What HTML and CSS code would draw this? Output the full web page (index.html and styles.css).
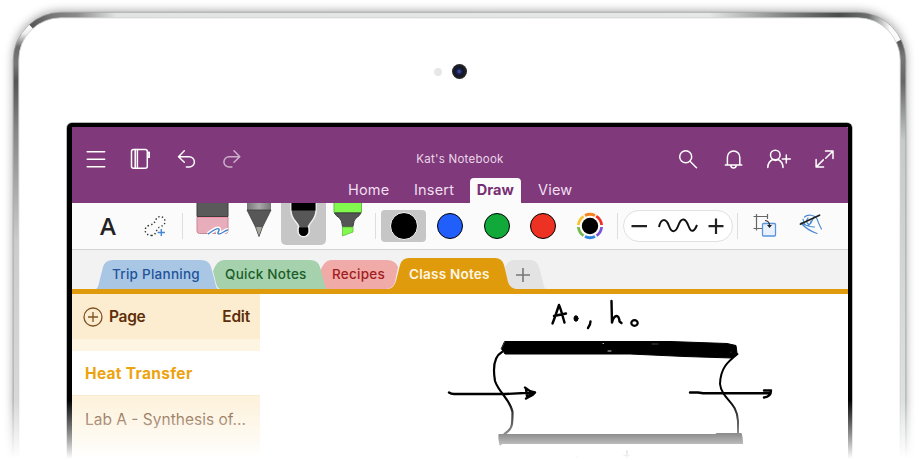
FILE: index.html
```html
<!DOCTYPE html>
<html lang="en">
<head>
<meta charset="utf-8">
<title>Kat's Notebook</title>
<link rel="stylesheet" href="styles.css">
</head>
<body>
<div class="stage">
  <div class="tablet">
    <svg class="bezel" viewBox="0 0 919 460" fill="none">
      <defs>
        <linearGradient id="topEdge" gradientUnits="userSpaceOnUse" x1="30" y1="0" x2="890" y2="0">
          <stop offset="0" stop-color="#555"/><stop offset=".025" stop-color="#777"/><stop offset=".055" stop-color="#8c8c8c"/><stop offset=".1" stop-color="#e2e4e4"/>
          <stop offset=".79" stop-color="#e6e8e8"/><stop offset=".88" stop-color="#808282"/><stop offset=".94" stop-color="#4b4c4c"/><stop offset=".975" stop-color="#6d6f6f"/><stop offset="1" stop-color="#fafafa"/>
        </linearGradient>
        <linearGradient id="leftEdge" gradientUnits="userSpaceOnUse" x1="0" y1="25" x2="0" y2="460">
          <stop offset="0" stop-color="#fff"/><stop offset=".02" stop-color="#eee"/><stop offset=".05" stop-color="#6c6c6c"/><stop offset=".09" stop-color="#777"/>
          <stop offset=".13" stop-color="#555"/><stop offset=".24" stop-color="#858585"/><stop offset=".5" stop-color="#ccc"/><stop offset="1" stop-color="#ddd"/>
        </linearGradient>
        <linearGradient id="rightEdge" gradientUnits="userSpaceOnUse" x1="0" y1="40" x2="0" y2="460">
          <stop offset="0" stop-color="#555"/><stop offset=".04" stop-color="#777"/><stop offset=".1" stop-color="#666"/><stop offset=".24" stop-color="#c8caca"/><stop offset="1" stop-color="#e4e6e6"/>
        </linearGradient>
      </defs>
      <path d="M16 470V60A45 45 0 0 1 31 26.500" stroke="url(#leftEdge)" stroke-width="5.500"/>
      <path d="M31 26.500A45 45 0 0 1 61 15H858A45 45 0 0 1 898.500 41" stroke="url(#topEdge)" stroke-width="5.500"/>
      <path d="M898.500 41A45 45 0 0 1 903 60V470" stroke="url(#rightEdge)" stroke-width="5.500"/>
      <path d="M13.200 470V60A48 48 0 0 1 61 12.300H858A48 48 0 0 1 905.800 60V470" stroke="#9a9a9a" stroke-width=".8"/>
      <path d="M18.800 470V60A42 42 0 0 1 61 17.800H858A42 42 0 0 1 900.200 60V470" stroke="#c9cccb" stroke-width=".8"/>
    </svg>
    <div class="camera"><span class="sensor"></span><span class="lens"></span></div>
    <div class="screen">
      <header class="header">
        <div class="topbar">
          <div class="icons">
            <svg viewBox="0 0 24 24"><path d="M3.200 4.700h17.500M3.200 12.200h17.500M3.200 19.700h17.500"/></svg>
            <svg viewBox="0 0 24 24"><rect x="2.500" y="2.500" width="15.800" height="18.700" rx="2"/><path d="M6.200 2.500v18.500M8.400 2.500v18.500"/><path d="M19.200 5.500h.9v4.700h-.9" stroke-width="1.800"/></svg>
            <svg viewBox="0 0 24 24"><path d="M9.300 3.800 3.500 9.700l5.800 5.600M3.800 9.700h10.400a5.200 5.200 0 0 1 0 10.400h-2.800"/></svg>
            <svg class="dim" viewBox="0 0 24 24"><path d="M14 3.800l5.800 5.900-5.800 5.600M19.500 9.700H9.100a5.200 5.200 0 0 0 0 10.400h2.800"/></svg>
          </div>
          <div class="title">Kat's Notebook</div>
          <div class="icons right">
            <svg viewBox="0 0 24 24"><circle cx="9.700" cy="9.800" r="6"/><path d="m14 14.300 6.500 6.400"/></svg>
            <svg viewBox="0 0 24 24"><path d="M3.300 18h16.500M5.400 18V10.200a6.200 6.200 0 0 1 12.400 0V18M8.800 18.200a2.700 2.700 0 0 0 5.400 0"/></svg>
            <svg viewBox="0 0 24 24"><circle cx="8.300" cy="8" r="4.800"/><path d="M.8 20.500c0-5 3-7 5-8 1.700 1.200 3.700 1.200 5.200 0 2 1 5 3 5 8M19.300 7.900v8M15.300 11.900h8"/></svg>
            <svg viewBox="0 0 24 24"><path d="M12.500 4H20v7.500M19.800 4.200l-7.100 7M3.100 12.600v7.500h7.500M3.300 19.900l7-7"/></svg>
          </div>
        </div>
        <nav class="ribbon"><a class="home">Home</a><a class="insert">Insert</a><a class="active">Draw</a><a class="view">View</a></nav>
      </header>

      <div class="toolbar">
        <div class="tool letter">A</div>
        <div class="tool"><svg width="46" height="46" viewBox="131 203 46 46" fill="none"><path d="M152 235.500c-8 0-9-8-3-10 4-1 6-3 7-6 2-5 9-3 9 2 0 4-3 4-6 6-3 2-3 8-7 8z" stroke="#333" stroke-width="1.400" stroke-dasharray="1.400 2.200"/><path d="M161 227.500v8M157.500 232.500h7.500" stroke="#fafafa" stroke-width="3.500"/><path d="M161.300 229v7M157.600 232.500h7.300" stroke="#4288d6" stroke-width="1.400"/></svg></div>
        <i class="sep sep-a"></i>
        <div class="tool"><svg width="46" height="46" viewBox="189 203 46 46" fill="none"><path d="M197 217h31v14q0 2.500-2.500 2.500h-26q-2.500 0-2.500-2.500z" fill="#e8adba" stroke="#cc8896"/><path d="M197 202h31v14.500h-31z" fill="#5a5a5a" stroke="#3c3c3c"/><path d="M198 217.500h29" stroke="#f491a8"/><path d="M208 234c5-3 9-7 11-5 1 2-3 4 0 5 3 0 6-4 9-4" stroke="#fff" stroke-width="4"/><path d="M208 234c5-3 9-7 11-5 1 2-3 4 0 5 3 0 6-4 9-4" stroke="#4386d0" stroke-width="1.500"/></svg></div>
        <div class="tool"><svg width="46" height="46" viewBox="235 203 46 46"><defs><linearGradient id="barrel"><stop stop-color="#777"/><stop offset=".5" stop-color="#aaa"/><stop offset="1" stop-color="#777"/></linearGradient></defs><path d="M247 203h24v7h-24z" fill="url(#barrel)"/><path d="M247 210h24l-8.500 17-3.500 9.500-3.500-9.500z" fill="#575757" stroke="#3d3d3d" stroke-width=".8"/><path d="m256 227.500 1.300-.5h3.600l1.100.5-3 8z" fill="#a5a59c"/></svg></div>
        <div class="tool narrow selected"><svg width="46" height="46" viewBox="281 203 46 46"><path d="M291 202h25v9c0 8-6 11-7.500 15.500q.8 1 .8 4.500a5.700 5.700 0 0 1-11.400 0q0-3.500.8-4.500c-1.500-4.500-7.700-7.500-7.700-15.500z" fill="#575757" stroke="#eee" stroke-width="1.500"/><path d="M291.500 202h24v8.500h-24zM299 227.500h9v4a4.500 4.500 0 0 1-9 0z"/></svg></div>
        <div class="tool narrow"><svg width="46" height="46" viewBox="326 203 46 46"><path d="M334 202h27.500v10.500H334z" fill="#82f94f" stroke="#64bd40"/><path d="M334.500 213h26.500q-1.500 3-5 5-2.500 2-3 8.500h-10.500q-.5-6.500-3-8.500-3.500-2-5-5z" fill="#555" stroke="#3c3c3c"/><path d="M342.500 227H353v5l-10.500 4z" fill="#82f94f" stroke="#64bd40" stroke-width=".8"/></svg></div>
        <i class="sep sep-b"></i>
        <div class="swatches">
          <div class="swatch chosen"><b class="black"></b></div>
          <div class="swatch"><b class="blue"></b></div>
          <div class="swatch"><b class="green"></b></div>
          <div class="swatch"><b class="red"></b></div>
          <div class="swatch"><svg width="28" height="28" viewBox="-14 -14 28 28" fill="none" stroke-width="2.800">
            <path d="M-5-10.600A11.700 11.700 0 0 1 5-10.600" stroke="#f5841f"/><path d="M6.200-9.900A11.700 11.700 0 0 1 11.600-1" stroke="#ef2e24"/><path d="M11.600 1A11.700 11.700 0 0 1 6.500 9.700" stroke="#7b54d8"/><path d="M5 10.600A11.700 11.700 0 0 1-5 10.600" stroke="#2c83e0"/><path d="M-6.500 9.700A11.700 11.700 0 0 1-11.600 1" stroke="#73b94c"/><path d="M-11.600-1A11.700 11.700 0 0 1-6.500-9.700" stroke="#f9c22d"/><circle r="8.200" fill="#000"/></svg></div>
        </div>
        <i class="sep sep-c"></i>
        <div class="thickness"><svg width="109" height="32" viewBox="0 0 109 32" fill="none" stroke="#222" stroke-width="2.200"><path d="M7.500 15.200H23M84.500 15.200h15M92 7.500v15.500"/><path d="M35 16c2-9 7-9 10-1 3 8 7 6 9.500-1 3-8 7-7 10 1 3 8 6 5 8.500-1" stroke="#111" stroke-width="2"/></svg></div>
        <i class="sep sep-d"></i>
        <div class="tool shapes"><svg width="46" height="46" viewBox="742 203 46 46" fill="none"><path d="M756.500 214v16.500M753.500 216.500h14M767.500 214v5M753.500 228.500h9" stroke="#666" stroke-width="1.200"/><rect x="762.500" y="223.500" width="13" height="12.500" rx="1" fill="#e9f2fc" stroke="#5994da" stroke-width="1.300"/><path d="M765 220.500q4.500.5 4.500 5" stroke="#333" stroke-width="1.200"/><path d="m767 225 2.500 3 2.500-3z" fill="#222"/></svg></div>
        <div class="tool"><svg width="46" height="46" viewBox="788 203 46 46" fill="none" stroke-linecap="round"><path d="M801 223c5 6 9 8 16 10.500M803 219c2 10 7 7 8 2M804.500 217c3-3 10-2 12 1 2 4 2 6 5 11M808 218c-3 4 0 8 3 5l3-6M801.500 223c5 3 8 4 13 4" stroke="#4c8bd0" stroke-width="1.200"/><path d="m800.500 224 19-8.800" stroke="#222" stroke-width="1.800"/></svg></div>
      </div>

      <div class="sections">
        <div class="tab trip"><svg viewBox="0 0 122 29" preserveAspectRatio="none"><path d="M0 29Q2 28 3 23L7 7Q9 0 17 0H105Q113 0 115 7L119 22Q120 28 122 29z"/></svg><span>Trip Planning</span></div>
        <div class="tab quick"><svg viewBox="0 0 115 29" preserveAspectRatio="none"><path d="M7 29Q4 28 3 23L0 11Q4 0 11 0H97Q105 0 107 7L111 22Q112 28 115 29z"/></svg><span>Quick Notes</span></div>
        <div class="tab recipes"><svg viewBox="0 0 80 29" preserveAspectRatio="none"><path d="M6 29Q4 28 3 23L0 12Q4 0 11 0H67Q75 0 78 7L75 22Q73 29 66 29z"/></svg><span>Recipes</span></div>
        <div class="tab current"><svg viewBox="0 0 128 31" preserveAspectRatio="none"><path d="M0 31Q6 30 8 23L12 7Q14 0 21 0H107Q114 0 116 7L120 24Q122 30 128 31z"/></svg><span>Class Notes</span></div>
        <div class="tab add"><svg viewBox="0 0 42 29" preserveAspectRatio="none"><path d="M8 29Q4 27 3 22L0 9Q4 0 10 0H26Q33 0 35 7L39 22Q40 28 42 29z"/><path class="plus" d="M12 15h14M19 8v14"/></svg></div>
      </div>

      <main class="content">
        <aside class="pages">
          <div class="pagehead"><svg width="20" height="20" viewBox="0 0 20 20"><circle cx="10" cy="10" r="9"/><path d="M5 10h10M10 5v10"/></svg><span class="add-page">Page</span><span class="edit">Edit</span></div>
          <div class="strip"></div>
          <div class="page open"><span>Heat Transfer</span></div>
          <div class="page lab"><span>Lab A - Synthesis of...</span></div>
        </aside>
        <svg class="ink" viewBox="260 294 588 166" fill="none" stroke="#000" stroke-linecap="round" stroke-linejoin="round">
          <path d="M552.500 323.500c2-5 5-14 6.500-18.500 2 4 4 13 5.500 17.500M554 316l12-2.500" stroke-width="2.400"/>
          <ellipse cx="576" cy="318.500" rx="2" ry="2.800" fill="#000"/>
          <path d="M590.500 321.500c0 3-1 4.500-2.500 6.500M611.500 301l.5 21.500c2-8 7-9 7.500-1l2 1.500" stroke-width="2.400"/>
          <ellipse cx="634.500" cy="323" rx="3.200" ry="2.800" stroke-width="2.200"/>
          <path d="M505 341.500H670L727 343.500 736 345.500 737 353 732 358 685 356.500 630 354H505L501.500 349z" fill="#000" stroke-width="1"/>
          <path d="M502 352c-9 5-9 17-7 29 4 12 15 18 17.500 31 0 13 0 17-8 22" stroke-width="2.200"/>
          <path d="M449 392.500q2 1.500 5 1.500h51l29-1.500M525 387.500c2 2 5 4 10 5-2 3-6 4-9 6M526 389l1 7 5-2" stroke-width="2.400"/>
          <path d="M737.500 354c-10 8-17 14-17.500 30 2 16 17 17 18 37v14" stroke-width="2"/>
          <path d="M690 392.500h8l5 .8h66M764 390.500h7c0 4-3 6.500-7 7" stroke-width="2.400"/>
          <path d="M499 434.500h217l1-1h24q1 2 1.500 10H502l-2 1.500-1-6z" fill="#000" stroke-width="1.200"/>
          <path d="M575 461l2-4M627 451v8M624 455.500h5" stroke-width="1.500"/>
          <path d="M603 343.500h.5M608 351h3" stroke="#ccc" stroke-width="1"/>
          <path d="M652 344h6M731 352v.3" stroke="#555" stroke-width=".8"/>
        </svg>
      </main>
    </div>
  </div>
  <div class="fade"></div>
</div>
</body>
</html>
```
FILE: styles.css
```css
* { box-sizing: border-box; }
body { margin: 0; background: #fff; font-family: Inter, "Liberation Sans", sans-serif; }
.stage { position: relative; width: 919px; height: 460px; overflow: hidden; }
.tablet { height: 500px; margin: 12px 13px 0; padding: 51px 54px 0; border-radius: 48px; background: #fff; box-shadow: 0 -1px 10px rgba(0,0,0,.36); }
.bezel { position: absolute; left: 0; top: 0; width: 919px; height: 460px; }
.camera { display: flex; align-items: center; gap: 10px; height: 17px; margin-left: 367px; }
.sensor { width: 8px; height: 8px; border-radius: 50%; background: #e6e7e7; }
.lens { width: 15px; height: 15px; border-radius: 50%; background: radial-gradient(circle at 48% 50%, #3c4896 0 1px, #182056 2.5px, #15171f 4.5px, #25272b 7px); }
.screen { position: relative; height: 400px; margin-top: 43px; width: 785px; border: 4px solid #000; border-left-width: 5px; border-bottom: 0; border-radius: 5px 5px 0 0; background: #fff; box-shadow: 0 0 0 .7px #9ca39f; overflow: hidden; }
.header { height: 76px; background: #80397b; color: #f0dff0; padding-top: 20px; }
.topbar { display: grid; grid-template-columns: 1fr auto 1fr; align-items: center; height: 24px; padding: 0 11.5px; }
.icons { display: flex; gap: 21.5px; }
.icons.right { justify-content: flex-end; }
.icons svg { width: 24px; height: 24px; fill: none; stroke: #fff; stroke-width: 1.5; stroke-linecap: round; stroke-linejoin: round; }
.icons .dim { opacity: .6; }
.title { font-size: 11.5px; letter-spacing: .25px; color: #ead7e9; }
.ribbon { display: flex; align-items: flex-start; margin-top: 7px; padding-left: 276px; height: 25px; font-size: 14.5px; line-height: 24px; }
.ribbon a { width: 66px; letter-spacing: .2px; white-space: nowrap; }
.ribbon .insert { width: 55.5px; }
.ribbon .active { width: 51.5px; height: 26px; margin-right: 17px; border-radius: 4px 4px 0 0; background: #fbfbfb; color: #782f73; font-weight: 700; text-align: center; letter-spacing: 0; }
.toolbar { display: flex; height: 46.5px; padding-left: 13px; background: #fbfbfb; border-bottom: 1px solid #d3d3d5; }
.tool { flex: none; width: 46px; height: 46px; overflow: hidden; }
.tool.narrow { width: 45px; }
.tool svg, .swatch svg, .thickness svg { display: block; }
.tool.letter { font-family: "Open Sans", Inter, sans-serif; font-size: 24px; font-weight: 600; line-height: 45px; text-align: center; color: #222; }
.tool.selected { height: 42px; background: #c6c6c6; border-radius: 0 0 5px 5px; }
.sep { flex: none; width: 1px; height: 26px; margin-top: 10px; background: #dedede; }
.sep-a { margin-left: 5px; margin-right: 6px; }
.sep-b { margin-left: 4px; margin-right: 5px; }
.sep-c { margin-left: 5px; margin-right: 5px; }
.sep-d { margin-left: 4px; margin-right: 4px; }
.swatches { display: flex; gap: 1.5px; margin-top: 7px; }
.swatch { display: flex; align-items: center; justify-content: center; width: 45px; height: 32px; border-radius: 4px; }
.swatch.chosen { background: #c6c6c6; }
.swatch b { width: 26px; height: 26px; border-radius: 50%; border: 1px solid; }
.swatch .black { width: 28px; height: 28px; background: #000; border-color: #fff; }
.blue { background: #205ffb; border-color: #1748c8; }
.green { background: #12a93b; border-color: #0b8029; }
.red { background: #ed3123; border-color: #bd2419; }
.thickness { flex: none; width: 110px; height: 32px; margin-top: 7px; border: 1px solid #e1e1e1; border-radius: 16px; background: #fff; }
.sections { display: flex; align-items: flex-end; height: 44.5px; padding-left: 24px; border-bottom: 5px solid #df9b0b; background: #f2f2f3; font-size: 13.5px; font-weight: 500; }
.tab { position: relative; flex: none; height: 29px; line-height: 28px; white-space: nowrap; letter-spacing: .25px; }
.tab svg { position: absolute; left: 0; bottom: 0; width: 100%; height: 100%; }
.tab span { position: relative; }
.trip { width: 122px; padding-left: 16px; color: #21549a; fill: #a9c6e5; z-index: 2; }
.quick { width: 115px; margin-left: -5px; padding-left: 12px; color: #1a5d29; fill: #a5d1ad; z-index: 1; }
.recipes { width: 80px; margin-left: -8px; padding-left: 12px; color: #a21d20; fill: #f0aba8; }
.current { width: 128px; height: 31px; line-height: 32px; margin-left: -12px; padding-left: 21px; color: #fff7e6; fill: #df9b0b; font-weight: 600; z-index: 3; }
.add { width: 42px; margin-left: -12px; fill: #e3e3e4; }
.plus { fill: none; stroke: #777; stroke-width: 1.6; }
.content { display: flex; }
.pages { width: 188px; flex: none; }
.pagehead { display: flex; align-items: center; height: 45px; padding: 0 10px 0 11px; background: #fcedd0; color: #5f2f0b; font-size: 15.5px; font-weight: 600; }
.pagehead svg { fill: none; stroke: #7d5323; stroke-width: 1.3; }
.add-page { margin-left: 6px; letter-spacing: -.3px; }
.edit { margin-left: auto; letter-spacing: -.2px; }
.strip { height: 12px; background: #fdf4e1; }
.page { height: 44px; padding-left: 13px; line-height: 45px; font-size: 15.5px; white-space: nowrap; }
.open { color: #eda310; font-weight: 700; letter-spacing: .3px; }
.lab { height: 70px; line-height: 47px; background: #fdf2dc; border-top: 1px solid #faecd3; color: #7d532e; }
.ink { width: 588px; height: 166px; flex: none; }
.fade { position: absolute; left: 0; right: 0; top: 400px; height: 60px; background: linear-gradient(rgba(255,255,255,0), rgba(255,255,255,.56) 57%, #fff 98%); }
```
